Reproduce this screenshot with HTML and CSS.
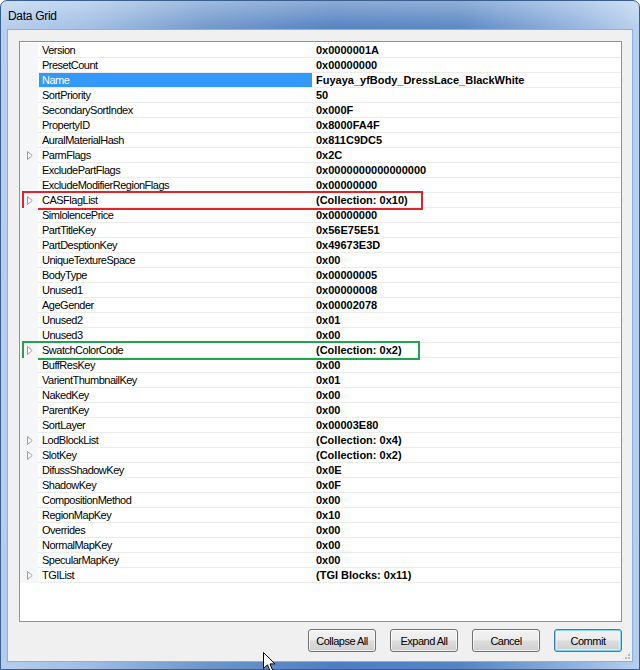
FILE: index.html
```html
<!DOCTYPE html>
<html>
<head>
<meta charset="utf-8">
<link rel="stylesheet" href="styles.css">
</head>
<body>
<div class="window">
  <div class="titlebar">Data Grid</div>
  <div class="client">
    <div class="grid">
      <div class="row"><span class="gutter"></span><span class="name">Version</span><span class="value">0x0000001A</span></div>
      <div class="row"><span class="gutter"></span><span class="name">PresetCount</span><span class="value">0x00000000</span></div>
      <div class="row"><span class="gutter"></span><span class="name selected">Name</span><span class="value">Fuyaya_yfBody_DressLace_BlackWhite</span></div>
      <div class="row"><span class="gutter"></span><span class="name">SortPriority</span><span class="value">50</span></div>
      <div class="row"><span class="gutter"></span><span class="name">SecondarySortIndex</span><span class="value">0x000F</span></div>
      <div class="row"><span class="gutter"></span><span class="name">PropertyID</span><span class="value">0x8000FA4F</span></div>
      <div class="row"><span class="gutter"></span><span class="name">AuralMaterialHash</span><span class="value">0x811C9DC5</span></div>
      <div class="row"><span class="gutter"><svg class="expander" width="6" height="9" viewBox="0 0 6 9"><polygon points="0.5,0.5 5.2,4.5 0.5,8.5" /></svg></span><span class="name">ParmFlags</span><span class="value">0x2C</span></div>
      <div class="row"><span class="gutter"></span><span class="name">ExcludePartFlags</span><span class="value">0x0000000000000000</span></div>
      <div class="row"><span class="gutter"></span><span class="name">ExcludeModifierRegionFlags</span><span class="value">0x00000000</span></div>
      <div class="row"><span class="gutter"><svg class="expander" width="6" height="9" viewBox="0 0 6 9"><polygon points="0.5,0.5 5.2,4.5 0.5,8.5" /></svg></span><span class="name">CASFlagList</span><span class="value">(Collection: 0x10)</span><span class="mark mark-red"></span></div>
      <div class="row"><span class="gutter"></span><span class="name">SimlolencePrice</span><span class="value">0x00000000</span></div>
      <div class="row"><span class="gutter"></span><span class="name">PartTitleKey</span><span class="value">0x56E75E51</span></div>
      <div class="row"><span class="gutter"></span><span class="name">PartDesptionKey</span><span class="value">0x49673E3D</span></div>
      <div class="row"><span class="gutter"></span><span class="name">UniqueTextureSpace</span><span class="value">0x00</span></div>
      <div class="row"><span class="gutter"></span><span class="name">BodyType</span><span class="value">0x00000005</span></div>
      <div class="row"><span class="gutter"></span><span class="name">Unused1</span><span class="value">0x00000008</span></div>
      <div class="row"><span class="gutter"></span><span class="name">AgeGender</span><span class="value">0x00002078</span></div>
      <div class="row"><span class="gutter"></span><span class="name">Unused2</span><span class="value">0x01</span></div>
      <div class="row"><span class="gutter"></span><span class="name">Unused3</span><span class="value">0x00</span></div>
      <div class="row"><span class="gutter"><svg class="expander" width="6" height="9" viewBox="0 0 6 9"><polygon points="0.5,0.5 5.2,4.5 0.5,8.5" /></svg></span><span class="name">SwatchColorCode</span><span class="value">(Collection: 0x2)</span><span class="mark mark-green"></span></div>
      <div class="row"><span class="gutter"></span><span class="name">BuffResKey</span><span class="value">0x00</span></div>
      <div class="row"><span class="gutter"></span><span class="name">VarientThumbnailKey</span><span class="value">0x01</span></div>
      <div class="row"><span class="gutter"></span><span class="name">NakedKey</span><span class="value">0x00</span></div>
      <div class="row"><span class="gutter"></span><span class="name">ParentKey</span><span class="value">0x00</span></div>
      <div class="row"><span class="gutter"></span><span class="name">SortLayer</span><span class="value">0x00003E80</span></div>
      <div class="row"><span class="gutter"><svg class="expander" width="6" height="9" viewBox="0 0 6 9"><polygon points="0.5,0.5 5.2,4.5 0.5,8.5" /></svg></span><span class="name">LodBlockList</span><span class="value">(Collection: 0x4)</span></div>
      <div class="row"><span class="gutter"><svg class="expander" width="6" height="9" viewBox="0 0 6 9"><polygon points="0.5,0.5 5.2,4.5 0.5,8.5" /></svg></span><span class="name">SlotKey</span><span class="value">(Collection: 0x2)</span></div>
      <div class="row"><span class="gutter"></span><span class="name">DifussShadowKey</span><span class="value">0x0E</span></div>
      <div class="row"><span class="gutter"></span><span class="name">ShadowKey</span><span class="value">0x0F</span></div>
      <div class="row"><span class="gutter"></span><span class="name">CompositionMethod</span><span class="value">0x00</span></div>
      <div class="row"><span class="gutter"></span><span class="name">RegionMapKey</span><span class="value">0x10</span></div>
      <div class="row"><span class="gutter"></span><span class="name">Overrides</span><span class="value">0x00</span></div>
      <div class="row"><span class="gutter"></span><span class="name">NormalMapKey</span><span class="value">0x00</span></div>
      <div class="row"><span class="gutter"></span><span class="name">SpecularMapKey</span><span class="value">0x00</span></div>
      <div class="row"><span class="gutter"><svg class="expander" width="6" height="9" viewBox="0 0 6 9"><polygon points="0.5,0.5 5.2,4.5 0.5,8.5" /></svg></span><span class="name">TGIList</span><span class="value">(TGI Blocks: 0x11)</span></div>
    </div>
    <div class="buttons">
      <button class="btn">Collapse All</button>
      <button class="btn">Expand All</button>
      <button class="btn">Cancel</button>
      <button class="btn btn-default">Commit</button>
    </div>
    <span class="grip"></span>
  </div>
  <svg class="cursor" width="13" height="21" viewBox="0 0 13 21"><path d="M0.5,0.5 L0.5,16.5 L4.5,12.8 L7.2,19.2 L9.6,18.2 L7,11.9 L12,11.9 Z" fill="#fff" stroke="#000" stroke-width="1" stroke-linejoin="miter"/></svg>
</div>
</body>
</html>
```

FILE: styles.css
```css
html, body {
  margin: 0;
  padding: 0;
  width: 640px;
  height: 670px;
  overflow: hidden;
  background: #ffffff;
}

.window {
  position: relative;
  box-sizing: border-box;
  width: 640px;
  height: 670px;
  display: flex;
  flex-direction: column;
  border: 1px solid #3a5f8e;
  border-radius: 7px 7px 0 0;
  background:
    linear-gradient(to bottom, rgba(255,255,255,0.35) 0px, rgba(255,255,255,0.05) 26px, rgba(255,255,255,0) 100%),
    linear-gradient(to right, #b4cdec 0%, #9ebde4 14%, #6d96cb 32%, #4f7ec0 52%, #5584c2 72%, #8fb2de 90%, #b6cfee 100%);
  font-family: "Liberation Sans", Arial, sans-serif;
}

.titlebar {
  height: 27px;
  flex: none;
  display: flex;
  align-items: center;
  padding-left: 7px;
  padding-top: 1px;
  font-size: 12px;
  letter-spacing: -0.3px;
  color: #000;
}

.client {
  position: relative;
  flex: 1;
  margin: 0 6px 7px 6px;
  background: #f0f0f0;
  border: 1px solid #8fb0d6;
  padding: 11px 10px 0 11px;
  display: flex;
  flex-direction: column;
}

.grid {
  border: 1px solid #8e9298;
  background: #ffffff;
  padding-top: 1px;
  box-sizing: border-box;
  height: 581px;
}

.row {
  position: relative;
  display: flex;
  height: 15px;
  font-size: 11px;
  line-height: 14px;
  color: #000;
}

.gutter {
  width: 18px;
  flex: none;
  background: #f4f6f8;
  display: flex;
  align-items: center;
  padding-left: 7px;
  box-sizing: border-box;
}

.expander {
  display: block;
}

.expander polygon {
  fill: #ffffff;
  stroke: #9c9c9c;
  stroke-width: 1;
}

.name {
  width: 274px;
  flex: none;
  box-sizing: border-box;
  padding-left: 4px;
  border-bottom: 1px solid #ececec;
  white-space: nowrap;
  letter-spacing: -0.5px;
}

.name.selected {
  background: #3399ff;
  color: #ffffff;
  margin-left: 1px;
  width: 273px;
  padding-left: 3px;
}

.value {
  flex: 1;
  padding-left: 4px;
  border-bottom: 1px solid #ececec;
  font-weight: bold;
  white-space: nowrap;
  letter-spacing: 0;
}

.mark {
  position: absolute;
  left: 2px;
  width: 397px;
  top: -2px;
  height: 15px;
  border: 2px solid;
}

.mark-red {
  border-color: #e3232c;
}

.mark-green {
  border-color: #21a450;
  width: 394px;
}

.buttons {
  display: flex;
  justify-content: flex-end;
  gap: 14px;
  margin-top: 7px;
}

.btn {
  width: 68px;
  height: 23px;
  box-sizing: border-box;
  border: 1px solid #707070;
  border-radius: 3px;
  background: linear-gradient(to bottom, #f2f2f2 0%, #ebebeb 48%, #dddddd 52%, #cfcfcf 100%);
  box-shadow: inset 0 0 0 1px rgba(255,255,255,0.7);
  font-family: "Liberation Sans", Arial, sans-serif;
  font-size: 11px;
  letter-spacing: -0.5px;
  color: #000;
  padding: 0;
}

.btn-default {
  border-color: #3c7fb1;
  box-shadow: inset 0 0 0 1px #7fd2f2, inset 0 0 0 2px rgba(255,255,255,0.5);
}

.grip {
  position: absolute;
  right: 1px;
  bottom: 1px;
  width: 9px;
  height: 9px;
  background:
    radial-gradient(circle at 1px 1px, #b9b9b9 0.9px, transparent 1px) 0 0 / 3px 3px;
  clip-path: polygon(100% 0, 100% 100%, 0 100%);
}

.cursor {
  position: absolute;
  left: 262px;
  top: 651px;
}
```
